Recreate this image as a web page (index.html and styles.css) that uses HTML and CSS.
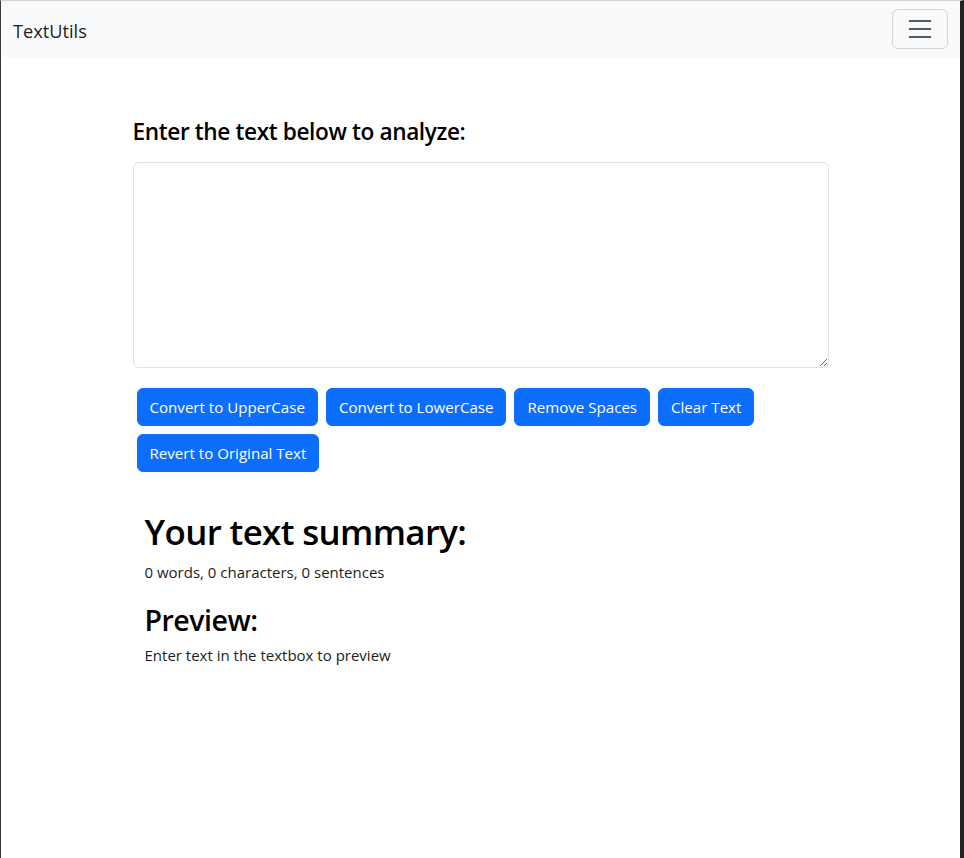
FILE: index.html
```html
<!DOCTYPE html>
<html lang="en">
<head>
<meta charset="utf-8">
<title>TextUtils</title>
<link rel="stylesheet" href="styles.css">
</head>
<body>
<div class="frame">
  <nav class="navbar">
    <a class="brand" href="#">TextUtils</a>
    <button class="toggler" type="button" aria-label="Toggle navigation">
      <svg class="toggler-icon" viewBox="0 0 30 30" width="30" height="30"><path d="M4 7h22M4 15h22M4 23h22" stroke="rgba(33,37,41,0.75)" stroke-width="2" stroke-linecap="butt" fill="none"/></svg>
    </button>
  </nav>
  <main class="container">
    <h4 class="intro">Enter the text below to analyze:</h4>
    <textarea class="textbox" rows="8"></textarea>
    <div class="actions">
      <button class="btn" type="button">Convert to UpperCase</button>
      <button class="btn" type="button">Convert to LowerCase</button>
      <button class="btn" type="button">Remove Spaces</button>
      <button class="btn" type="button">Clear Text</button>
      <button class="btn" type="button">Revert to Original Text</button>
    </div>
    <section class="summary">
      <h1 class="summary-title">Your text summary:</h1>
      <p class="summary-stats">0 words, 0 characters, 0 sentences</p>
      <h2 class="preview-title">Preview:</h2>
      <p class="preview-text">Enter text in the textbox to preview</p>
    </section>
  </main>
</div>
</body>
</html>
```
FILE: styles.css
```css
* { box-sizing: border-box; }
html, body { margin: 0; padding: 0; height: 100%; }
body {
  background: #ffffff;
  color: #1b1e21;
  font-family: "Open Sans", "Noto Sans", sans-serif;
  font-size: 15px;
  line-height: 24px;
}
.frame {
  min-height: 100vh;
  border-top: 1px solid #d2d2d2;
  border-left: 1px solid #3a3a3a;
  border-right: 4px solid #232323;
  background: #ffffff;
}
.navbar {
  display: flex;
  justify-content: space-between;
  align-items: center;
  padding: 8px 12px;
  background: #f8f9fa;
  height: 56px;
}
.brand {
  color: rgba(0, 0, 0, 0.9);
  text-decoration: none;
  font-size: 18.2px;
  line-height: 30px;
  padding: 7px 0 3px;
}
.toggler {
  display: flex;
  align-items: center;
  justify-content: center;
  width: 56px;
  height: 40px;
  padding: 4px 12px;
  background: transparent;
  border: 1px solid rgba(0, 0, 0, 0.14);
  border-radius: 6px;
}
.toggler-icon { display: block; width: 30px; height: 30px; }
.container {
  width: 720px;
  margin: 0 auto;
  padding: 0 12px;
}
.intro {
  margin: 61px 0 16px;
  font-size: 22.65px;
  font-weight: 600;
  letter-spacing: -0.4px;
  line-height: 28px;
  color: #000;
}
.textbox {
  display: block;
  width: 100%;
  height: 206px;
  padding: 6px 12px;
  font-family: inherit;
  font-size: 15px;
  line-height: 24px;
  color: #212529;
  background: #fff;
  border: 1px solid #dee2e6;
  border-radius: 6px;
  resize: vertical;
  outline: none;
}
.actions {
  display: flex;
  flex-wrap: wrap;
  gap: 8px;
  margin-top: 16px;
  padding: 4px;
}
.btn {
  height: 38px;
  padding: 6px 12px;
  font-family: inherit;
  font-size: 15.1px;
  line-height: 24px;
  color: #fff;
  background: #0d6efd;
  border: 1px solid #0d6efd;
  border-radius: 6px;
  cursor: pointer;
}
.summary {
  margin-top: 33px;
  padding: 0 12px;
}
.summary-title {
  margin: 0 0 5px;
  font-size: 34.9px;
  font-weight: 600;
  letter-spacing: -0.65px;
  line-height: 45.75px;
  color: #000;
}
.summary-stats {
  margin: 0 0 17px;
}
.preview-title {
  margin: 0 0 4px;
  font-size: 28.55px;
  font-weight: 600;
  letter-spacing: -0.5px;
  line-height: 37.9px;
  color: #000;
}
.preview-text {
  margin: 0;
}
```
